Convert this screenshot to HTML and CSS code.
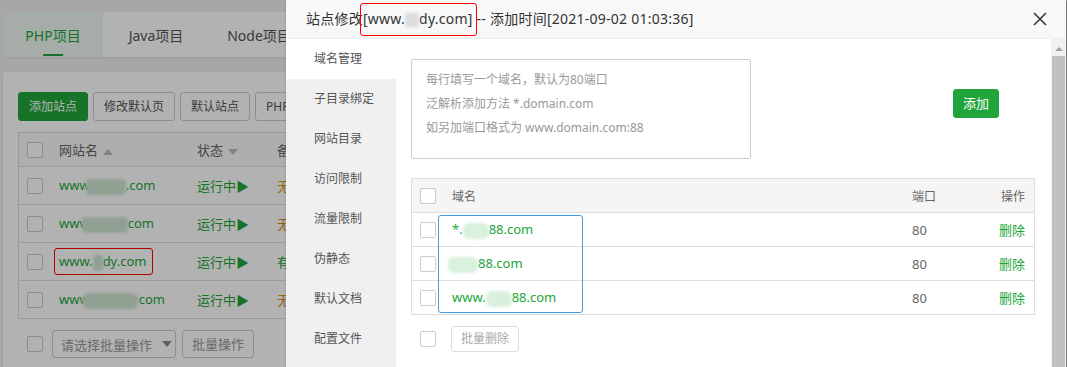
FILE: index.html
```html
<!DOCTYPE html>
<html lang="zh-CN">
<head>
<meta charset="utf-8">
<title>站点修改</title>
<link rel="stylesheet" href="styles.css">
</head>
<body>
<div class="page">
  <div class="card tabs">
    <div class="tab active">PHP项目</div>
    <div class="tab">Java项目</div>
    <div class="tab">Node项目</div>
    <div class="tab">Python项目</div>
  </div>
  <div class="card main">
    <div class="toolbar">
      <button class="btn btn-green">添加站点</button>
      <button class="btn">修改默认页</button>
      <button class="btn">默认站点</button>
      <button class="btn">PHP命令行版本</button>
    </div>
    <div class="sites">
      <div class="srow shead">
        <div class="c-chk"><span class="chk"></span></div>
        <div class="c-name">网站名 <span class="tri-up"></span></div>
        <div class="c-status">状态 <span class="tri-down"></span></div>
        <div class="c-remark">备注</div>
      </div>
      <div class="srow">
        <div class="c-chk"><span class="chk"></span></div>
        <div class="c-name link">www<span class="blob b1"></span>.com</div>
        <div class="c-status run">运行中▶</div>
        <div class="c-remark warn">无</div>
      </div>
      <div class="srow">
        <div class="c-chk"><span class="chk"></span></div>
        <div class="c-name link">www<span class="blob b2"></span>com</div>
        <div class="c-status run">运行中▶</div>
        <div class="c-remark warn">无</div>
      </div>
      <div class="srow">
        <div class="c-chk"><span class="chk"></span></div>
        <div class="c-name link"><span class="mark">www.<span class="blob b3"></span>dy.com</span></div>
        <div class="c-status run">运行中▶</div>
        <div class="c-remark run">有</div>
      </div>
      <div class="srow">
        <div class="c-chk"><span class="chk"></span></div>
        <div class="c-name link">www<span class="blob b4"></span>com</div>
        <div class="c-status run">运行中▶</div>
        <div class="c-remark warn">无</div>
      </div>
    </div>
    <div class="batch">
      <span class="chk"></span>
      <div class="select">请选择批量操作 <span class="tri-down dark"></span></div>
      <button class="btn btn-plain">批量操作</button>
    </div>
  </div>
</div>

<div class="mask"></div>

<div class="modal">
  <div class="modal-head">
    <div class="title">站点修改<span class="hl">[www.<span class="tblob"></span>dy.com]</span> -- 添加时间[2021-09-02 01:03:36]</div>
    <svg class="close" width="14" height="14" viewBox="0 0 14 14"><path d="M1 1L13 13M13 1L1 13" stroke="#333" stroke-width="1.5" fill="none"/></svg>
  </div>
  <div class="modal-body">
    <div class="side">
      <div class="side-item active">域名管理</div>
      <div class="side-item">子目录绑定</div>
      <div class="side-item">网站目录</div>
      <div class="side-item">访问限制</div>
      <div class="side-item">流量限制</div>
      <div class="side-item">伪静态</div>
      <div class="side-item">默认文档</div>
      <div class="side-item">配置文件</div>
    </div>
    <div class="content">
      <div class="add-row">
        <div class="textarea">
          <div>每行填写一个域名，默认为80端口</div>
          <div>泛解析添加方法 *.domain.com</div>
          <div>如另加端口格式为 www.domain.com:88</div>
        </div>
        <button class="btn btn-green btn-add">添加</button>
      </div>
      <div class="dtable">
        <div class="drow dhead">
          <div class="d-chk"><span class="chk"></span></div>
          <div class="d-name">域名</div>
          <div class="d-port">端口</div>
          <div class="d-op">操作</div>
        </div>
        <div class="drow">
          <div class="d-chk"><span class="chk"></span></div>
          <div class="d-name link2">*.<span class="gblob w25"></span>88.com</div>
          <div class="d-port">80</div>
          <div class="d-op link2">删除</div>
        </div>
        <div class="drow">
          <div class="d-chk"><span class="chk"></span></div>
          <div class="d-name link2 shift"><span class="gblob w30"></span>88.com</div>
          <div class="d-port">80</div>
          <div class="d-op link2">删除</div>
        </div>
        <div class="drow">
          <div class="d-chk"><span class="chk"></span></div>
          <div class="d-name link2">www.<span class="gblob w25"></span>88.com</div>
          <div class="d-port">80</div>
          <div class="d-op link2">删除</div>
        </div>
        <div class="bluebox"></div>
      </div>
      <div class="dbatch">
        <span class="chk"></span>
        <button class="btn btn-disabled">批量删除</button>
      </div>
    </div>
    <div class="scroll">
      <span class="arrow"></span>
      <div class="thumb"></div>
    </div>
  </div>
</div>
</body>
</html>
```

FILE: styles.css
```css
* { box-sizing: border-box; }

body {
  margin: 0;
  width: 1067px;
  height: 367px;
  overflow: hidden;
  background: #f0f0f0;
  font-family: "Noto Sans", "Noto Sans CJK SC", sans-serif;
  font-size: 12px;
  color: #666;
  position: relative;
}

/* ---------- background page ---------- */
.page { padding: 12px 0 0 3px; }

.card {
  background: #fff;
  border-radius: 4px;
  box-shadow: 0 1px 3px rgba(0, 0, 0, 0.08);
}

.tabs { display: flex; height: 45px; width: 1061px; overflow: hidden; }

.tab {
  width: 100px;
  display: flex;
  align-items: center;
  justify-content: center;
  font-size: 14px;
  color: #555;
  position: relative;
}
.tab:nth-child(2) { width: 106px; }
.tab.active { background: #eef7f0; color: #20a53a; border-radius: 4px 0 0 4px; }
.tab.active::after {
  content: "";
  position: absolute;
  left: 40px;
  bottom: 1px;
  width: 20px;
  height: 2px;
  background: #20a53a;
}

.main { margin-top: 15px; width: 1061px; height: 320px; padding: 20px 15px; }

.toolbar { display: flex; gap: 5px; }

.btn {
  height: 29px;
  padding: 0 10px;
  border: 1px solid #ccc;
  border-radius: 3px;
  background: #fff;
  font-family: inherit;
  font-size: 12px;
  color: #555;
  line-height: 27px;
}
.btn-green { background: #20a53a; border-color: #20a53a; color: #fff; }

.sites { margin-top: 11px; border: 1px solid #ddd; border-bottom: 0; }

.srow {
  display: flex;
  align-items: center;
  height: 38px;
  border-bottom: 1px solid #ddd;
  font-size: 13px;
}
.srow.shead { height: 34px; background: #fafafa; color: #666; font-size: 13px; }

.c-chk { width: 40px; padding-left: 8px; display: flex; align-items: center; }
.c-name { width: 138px; position: relative; white-space: nowrap; }
.c-status { width: 80px; white-space: nowrap; }
.c-remark { flex: 1; }

.chk {
  display: inline-block;
  width: 16px;
  height: 16px;
  border: 1px solid #ccc;
  border-radius: 2px;
  background: #fff;
  flex: none;
}

.tri-up, .tri-down {
  display: inline-block;
  width: 0;
  height: 0;
  border-left: 5px solid transparent;
  border-right: 5px solid transparent;
  vertical-align: middle;
  margin-left: 2px;
}
.tri-up { border-bottom: 6px solid #bbb; }
.tri-down { border-top: 6px solid #bbb; }
.tri-down.dark { border-top-color: #888; margin-left: 10px; }

.link { color: #20a53a; }
.run { color: #20a53a; }
.warn { color: #d4901c; }

.blob {
  display: inline-block;
  height: 16px;
  vertical-align: middle;
  background: #cfe6d3;
  border-radius: 4px;
  filter: blur(1.5px);
}
.b1 { width: 40px; margin-left: -4px; }
.b2 { width: 46px; margin-left: -8px; }
.b3 { width: 10px; }
.b4 { width: 57px; margin-left: -8px; border-radius: 8px; }

.mark { position: relative; }
.mark::after {
  content: "";
  position: absolute;
  left: -5px;
  right: -7px;
  top: -4px;
  bottom: -5px;
  border: 1px solid #f00;
  border-radius: 3px;
}

.batch { display: flex; align-items: center; gap: 9px; margin-top: 11px; padding-left: 9px; }
.select {
  width: 124px;
  height: 28px;
  border: 1px solid #ccc;
  border-radius: 3px;
  padding-left: 8px;
  display: flex;
  align-items: center;
  color: #999;
  font-size: 13px;
}
.btn-plain { height: 28px; color: #999; font-size: 13px; padding: 0 9px; margin-left: -3px; }

.mask {
  position: absolute;
  inset: 0;
  background: rgba(0, 0, 0, 0.3);
}

/* ---------- modal ---------- */
.modal {
  position: absolute;
  left: 286px;
  top: 0;
  width: 780px;
  height: 420px;
  background: #fff;
  box-shadow: 1px 1px 3px rgba(0, 0, 0, 0.45);
  display: flex;
  flex-direction: column;
}

.modal-head {
  height: 39px;
  flex: none;
  background: #f8f8f8;
  border-bottom: 1px solid #eee;
  padding: 0 19px 0 20px;
  display: flex;
  align-items: center;
  justify-content: space-between;
  font-size: 14px;
  color: #333;
}

.title { white-space: nowrap; line-height: 20px; letter-spacing: 0.25px; }
.hl { position: relative; }
.hl::after {
  content: "";
  position: absolute;
  left: -3px;
  right: -4px;
  top: -6px;
  bottom: -8px;
  border: 1px solid #f00;
  border-radius: 3px;
}
.tblob {
  display: inline-block;
  width: 14px;
  height: 14px;
  background: #ddd;
  vertical-align: middle;
  filter: blur(1.5px);
}

.close { display: block; }

.modal-body { display: flex; flex: 1; }

.side { width: 110px; background: #f0f0f0; flex: none; }
.side-item {
  height: 40px;
  line-height: 40px;
  padding-left: 28px;
  color: #555;
  font-size: 12px;
}
.side-item.active { background: #fff; }

.content { flex: 1; padding: 20px 16px 0 15px; }

.add-row { display: flex; align-items: flex-start; }

.textarea {
  width: 340px;
  height: 100px;
  border: 1px solid #ccc;
  border-radius: 2px;
  padding: 8px 14px;
  line-height: 24px;
  color: #999;
  font-size: 12px;
  white-space: nowrap;
}

.btn-add { margin: 30px 0 0 202px; width: 46px; padding: 0; font-size: 13px; }

.dtable { margin-top: 19px; border: 1px solid #ddd; border-bottom: 0; position: relative; }

.drow {
  display: flex;
  align-items: center;
  height: 34px;
  border-bottom: 1px solid #ddd;
  font-size: 13px;
  color: #666;
}
.drow.dhead { background: #f5f5f5; font-size: 12px; }

.d-chk { width: 40px; padding-left: 8px; display: flex; align-items: center; }
.d-name { flex: 1; white-space: nowrap; }
.d-name.shift { margin-left: -4px; }
.d-port { width: 82px; }
.d-op { width: 40px; text-align: right; padding-right: 9px; }

.link2 { color: #20a53a; }

.gblob {
  display: inline-block;
  height: 16px;
  vertical-align: middle;
  background: #d9f0dd;
  border-radius: 6px;
  filter: blur(1.5px);
}
.w25 { width: 26px; }
.w30 { width: 30px; }

.bluebox {
  position: absolute;
  left: 26px;
  top: 36px;
  width: 145px;
  height: 98px;
  border: 1px solid #3d9be9;
  border-radius: 3px;
}

.dbatch { display: flex; align-items: center; gap: 15px; margin-top: 11px; padding-left: 9px; }
.btn-disabled { height: 26px; width: 68px; padding: 0; border-color: #ddd; color: #aaa; font-size: 12px; line-height: 24px; }

.scroll { width: 15px; flex: none; background: #f1f1f1; position: relative; padding-top: 17px; }
.arrow {
  position: absolute;
  left: 4px;
  top: 8px;
  width: 0;
  height: 0;
  border-left: 4px solid transparent;
  border-right: 4px solid transparent;
  border-bottom: 4px solid #a3a3a3;
}
.thumb { margin-left: 1px; width: 13px; height: 400px; background: #c1c1c1; }
```
